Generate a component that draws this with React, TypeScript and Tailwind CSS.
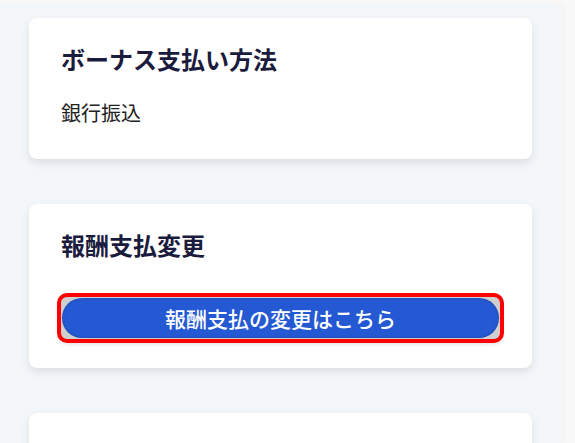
const font = { fontFamily: '"Noto Sans CJK JP", "Noto Sans", sans-serif' };

const Card = ({ children, className = '' }: { children: React.ReactNode; className?: string }) => (
  <section className={`bg-white rounded-lg shadow-[0_4px_8px_rgba(30,40,60,0.12)] px-8 ${className}`}>
    {children}
  </section>
);

export default function App() {
  return (
    <div className="min-h-[443px] h-[443px] overflow-hidden bg-[#f8f8f8] pt-[5px]" style={font}>
      <main className="w-[561px] h-full bg-[#f4f7fa] px-[29px] pt-[13px] flex flex-col gap-[45px] shadow-[2px_0_6px_rgba(0,0,0,0.03)] rounded-tr-sm">
        <Card className="pt-[29px] pb-[31px]">
          <h2 className="text-2xl leading-6 font-bold text-[#1b1b3d]">ボーナス支払い方法</h2>
          <p className="mt-[27px] text-xl leading-[30px] text-[#222222]">銀行振込</p>
        </Card>

        <Card className="pt-[29px] pb-[29px]">
          <h2 className="text-2xl leading-6 font-bold text-[#1b1b3d]">報酬支払変更</h2>
          <div className="mt-[40px] h-[42px] p-px rounded-md bg-[#cfcfcf] outline-4 outline-[#ff0000] shadow-[0_3px_6px_rgba(0,0,0,0.25)]">
            <button className="w-full h-full rounded-full bg-[#2459d3] text-white text-[21px] font-medium leading-none shadow-[inset_0_0_3px_rgba(0,0,0,0.25)]">
              報酬支払の変更はこちら
            </button>
          </div>
        </Card>

        <Card className="h-[120px] shrink-0">
          <span />
        </Card>
      </main>
    </div>
  );
}
